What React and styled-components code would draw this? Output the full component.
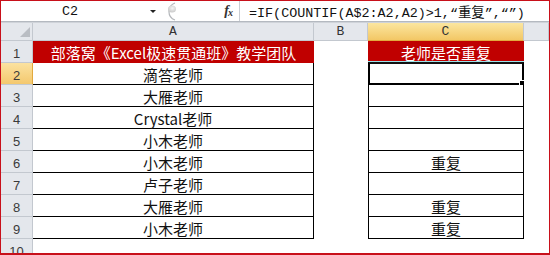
import React from "react";
import styled, { createGlobalStyle } from "styled-components";

const GlobalStyle = createGlobalStyle`
  html, body {
    margin: 0;
    padding: 0;
    background: #ffffff;
  }
`;

const CJK = `"Noto Sans CJK SC", "Noto Sans", sans-serif`;

const Frame = styled.div`
  width: 550px;
  height: 255px;
  box-sizing: border-box;
  border: 1px solid #c8101a;
  border-bottom-width: 2px;
  overflow: hidden;
  background: #ffffff;
  display: flex;
  flex-direction: column;
`;

const FormulaBar = styled.div`
  display: flex;
  align-items: stretch;
  height: 21px;
  border-bottom: 1px solid #b4b9c0;
  background: #ffffff;
  font-family: "Liberation Mono", ${CJK};
  font-size: 13.4px;
  color: #111;
`;

const NameBox = styled.div`
  width: 144px;
  display: flex;
  align-items: center;
  justify-content: center;
  padding-right: 6px;
  box-sizing: border-box;
`;

const Controls = styled.div`
  width: 94px;
  display: flex;
  align-items: center;
  border-right: 1px solid #c9cdd3;
`;

const Arrow = styled.span`
  width: 0;
  height: 0;
  margin-left: 5px;
  border-left: 3px solid transparent;
  border-right: 3px solid transparent;
  border-top: 3px solid #222;
`;

const Splitter = styled.svg`
  margin-left: 6px;
  flex: none;
`;

const Fx = styled.span`
  margin-left: auto;
  margin-right: 7px;
  font-family: "Liberation Serif", serif;
  font-style: italic;
  font-weight: bold;
  font-size: 14px;
  color: #333;
  letter-spacing: -1px;

  sub {
    font-size: 10px;
    vertical-align: -1px;
  }
`;

const FormulaText = styled.div`
  flex: 1;
  display: flex;
  align-items: center;
  padding-left: 9px;
  white-space: nowrap;
`;

const Band = styled.div`
  height: 2px;
  background: #e6e9ed;
  border-bottom: 1px solid #cfd3d9;
`;

const Grid = styled.div`
  display: grid;
  grid-template-columns: 32px 281px 54px 156px 1fr;
  grid-template-rows: 18px repeat(10, 22px);
  font-family: ${CJK};
  font-size: 15px;
  color: #111;
`;

const Corner = styled.div`
  background: #e4e7ec;
  border-right: 1px solid #c3c8cf;
  border-bottom: 1px solid #c3c8cf;
  display: flex;
  align-items: flex-end;
  justify-content: flex-end;
  padding: 0 2px 3px 0;
  box-sizing: border-box;
`;

const Triangle = styled.span`
  width: 0;
  height: 0;
  border-left: 10px solid transparent;
  border-bottom: 10px solid #b9bdc3;
`;

const ColHead = styled.div`
  box-sizing: border-box;
  background: ${(p) =>
    p.$active ? "linear-gradient(#fbe6a0, #f3c765)" : "#e4e7ec"};
  border-right: 1px solid #c3c8cf;
  border-bottom: 1px solid ${(p) => (p.$active ? "#e2a93e" : "#c3c8cf")};
  display: flex;
  align-items: center;
  justify-content: center;
  font-family: "Liberation Mono", monospace;
  font-size: 13px;
  color: #333;
`;

const RowHead = styled.div`
  box-sizing: border-box;
  background: ${(p) =>
    p.$active ? "linear-gradient(#fbe2a0, #f4c86e)" : "#e4e7ec"};
  border-right: 1px solid ${(p) => (p.$active ? "#e2a93e" : "#c3c8cf")};
  border-bottom: 1px solid #c3c8cf;
  display: flex;
  align-items: center;
  justify-content: center;
  padding-top: 4px;
  font-family: "Liberation Sans", sans-serif;
  font-size: 13px;
  color: #3a3a3a;
`;

const Cell = styled.div`
  position: relative;
  box-sizing: border-box;
  display: flex;
  align-items: center;
  justify-content: center;
  padding-top: 1px;
  white-space: nowrap;
  background: ${(p) => (p.$title ? "#c00000" : "#ffffff")};
  color: ${(p) => (p.$title ? "#ffffff" : "#111")};
  border-bottom: ${(p) => (p.$lined && !p.$title ? "1px solid #000" : "none")};
  border-right: ${(p) => (p.$lined && !p.$title ? "1px solid #000" : "none")};
  border-left: ${(p) => (p.$boxed && !p.$title ? "1px solid #000" : "none")};
`;

const Selected = styled.div`
  position: absolute;
  inset: -1px -1px -1px -1px;
  border: 2px solid #000;
  border-top-color: #111;
  box-shadow: 0 -1px 0 #9be3ea;
  pointer-events: none;
`;

const FillHandle = styled.span`
  position: absolute;
  right: -4px;
  bottom: -4px;
  width: 5px;
  height: 5px;
  background: #000;
  border: 1px solid #fff;
`;

const names = [
  "滴答老师",
  "大雁老师",
  "Crystal老师",
  "小木老师",
  "小木老师",
  "卢子老师",
  "大雁老师",
  "小木老师",
];

const repeats = ["", "", "", "", "重复", "", "重复", "重复"];

export default function App() {
  return (
    <>
      <GlobalStyle />
      <Frame>
        <FormulaBar>
          <NameBox>C2</NameBox>
          <Controls>
            <Arrow />
            <Splitter width="14" height="19" viewBox="0 0 14 19">
              <defs>
                <radialGradient id="knob" cx="0.55" cy="0.4" r="0.6">
                  <stop offset="0" stopColor="#f4f4f4" />
                  <stop offset="1" stopColor="#c9c9c9" />
                </radialGradient>
              </defs>
              <path
                d="M13 1 A9 9 0 0 0 13 18"
                fill="none"
                stroke="#b3b6ba"
                strokeWidth="1.2"
              />
              <ellipse cx="10" cy="7" rx="4" ry="3.5" fill="url(#knob)" />
            </Splitter>
            <Fx>
              f<sub>x</sub>
            </Fx>
          </Controls>
          <FormulaText>=IF(COUNTIF(A$2:A2,A2)&gt;1,“重复”,“”)</FormulaText>
        </FormulaBar>
        <Band />
        <Grid>
          <Corner>
            <Triangle />
          </Corner>
          <ColHead>A</ColHead>
          <ColHead>B</ColHead>
          <ColHead $active>C</ColHead>
          <ColHead />

          <RowHead>1</RowHead>
          <Cell $title>部落窝《Excel极速贯通班》教学团队</Cell>
          <Cell />
          <Cell $title>老师是否重复</Cell>
          <Cell />

          {names.map((name, i) => (
            <React.Fragment key={i}>
              <RowHead $active={i === 0}>{i + 2}</RowHead>
              <Cell $lined>{name}</Cell>
              <Cell />
              <Cell $lined $boxed>
                {repeats[i]}
                {i === 0 && (
                  <Selected>
                    <FillHandle />
                  </Selected>
                )}
              </Cell>
              <Cell />
            </React.Fragment>
          ))}

          <RowHead>10</RowHead>
          <Cell />
          <Cell />
          <Cell />
          <Cell />
        </Grid>
      </Frame>
    </>
  );
}
